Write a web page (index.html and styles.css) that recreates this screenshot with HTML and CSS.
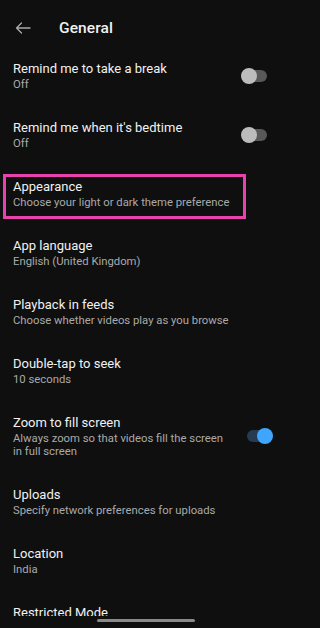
FILE: index.html
```html
<!DOCTYPE html>
<html lang="en">
<head>
<meta charset="utf-8">
<title>General</title>
<link rel="stylesheet" href="styles.css">
</head>
<body>
<div class="screen">
  <div class="content">
    <header class="topbar">
      <svg class="back" width="16" height="12" viewBox="0 0 16 12" aria-hidden="true">
        <path d="M15 6H1.5M6.5 1L1.5 6l5 5" fill="none" stroke="#aaaaaa" stroke-width="1.3" stroke-linecap="round" stroke-linejoin="round"/>
      </svg>
      <h1 class="title">General</h1>
    </header>
    <ul class="list">
      <li class="row">
        <div class="text"><div class="label">Remind me to take a break</div><div class="sub">Off</div></div>
        <span class="toggle"><span class="track"></span><span class="thumb"></span></span>
      </li>
      <li class="row">
        <div class="text"><div class="label">Remind me when it's bedtime</div><div class="sub">Off</div></div>
        <span class="toggle"><span class="track"></span><span class="thumb"></span></span>
      </li>
      <li class="row">
        <div class="text"><div class="label">Appearance</div><div class="sub">Choose your light or dark theme preference</div></div>
        <span class="mark"></span>
      </li>
      <li class="row">
        <div class="text"><div class="label">App language</div><div class="sub">English (United Kingdom)</div></div>
      </li>
      <li class="row">
        <div class="text"><div class="label">Playback in feeds</div><div class="sub">Choose whether videos play as you browse</div></div>
      </li>
      <li class="row">
        <div class="text"><div class="label">Double-tap to seek</div><div class="sub">10 seconds</div></div>
      </li>
      <li class="row">
        <div class="text narrow"><div class="label">Zoom to fill screen</div><div class="sub">Always zoom so that videos fill the screen in full screen</div></div>
        <span class="toggle on"><span class="track"></span><span class="thumb"></span></span>
      </li>
      <li class="row">
        <div class="text"><div class="label">Uploads</div><div class="sub">Specify network preferences for uploads</div></div>
      </li>
      <li class="row">
        <div class="text"><div class="label">Location</div><div class="sub">India</div></div>
      </li>
      <li class="row">
        <div class="text"><div class="label">Restricted Mode</div></div>
      </li>
    </ul>
  </div>
  <div class="navbar"><span class="handle"></span></div>
</div>
</body>
</html>
```
FILE: styles.css
```css
html, body {
  margin: 0;
  padding: 0;
  background: #0f0f0f;
}
body {
  font-family: Roboto, "Noto Sans", "Liberation Sans", sans-serif;
  color: #f1f1f1;
}
.screen {
  width: 292px;
  height: 628px;
  display: flex;
  flex-direction: column;
  background: #0f0f0f;
  overflow: hidden;
}
.content {
  height: 616px;
  flex: none;
  overflow: hidden;
}
.topbar {
  height: 36px;
  padding-top: 10px;
  display: flex;
  align-items: center;
}
.back {
  margin-left: 15px;
  margin-right: 28px;
}
.title {
  margin: 0;
  font-size: 15.5px;
  font-weight: 500;
  color: #f1f1f1;
  letter-spacing: 0.1px;
}
.list {
  list-style: none;
  margin: 0;
  padding: 0;
}
.row {
  position: relative;
  display: flex;
  align-items: center;
  padding: 13px 19px 14px 13px;
}
.text {
  flex: 1;
  min-width: 0;
}
.text.narrow {
  padding-right: 18px;
}
.label {
  font-size: 13px;
  line-height: 19px;
  color: #f1f1f1;
}
.sub {
  font-size: 11.3px;
  line-height: 13px;
  color: #aaaaaa;
}
.toggle {
  position: relative;
  width: 32px;
  height: 16px;
  flex: none;
  margin-top: 1px;
}
.track {
  position: absolute;
  left: 3px;
  top: 2px;
  width: 23px;
  height: 12px;
  border-radius: 6px;
  background: #585858;
}
.thumb {
  position: absolute;
  left: 0;
  top: 0;
  width: 16px;
  height: 16px;
  border-radius: 50%;
  background: #bcbcbc;
}
.toggle.on .track {
  left: 6px;
  background: #263a52;
}
.toggle.on .thumb {
  left: 16px;
  background: #3ea6ff;
}
.mark {
  position: absolute;
  left: 3px;
  top: 10px;
  width: 243px;
  height: 45px;
  box-sizing: border-box;
  border: 3px solid #e942ad;
}
.navbar {
  flex: 1;
  display: flex;
  justify-content: flex-start;
  align-items: flex-start;
  padding-top: 3px;
  padding-left: 97px;
}
.handle {
  display: block;
  width: 98px;
  height: 3px;
  flex: none;
  border-radius: 2px;
  background: #8a8a8a;
}
```
